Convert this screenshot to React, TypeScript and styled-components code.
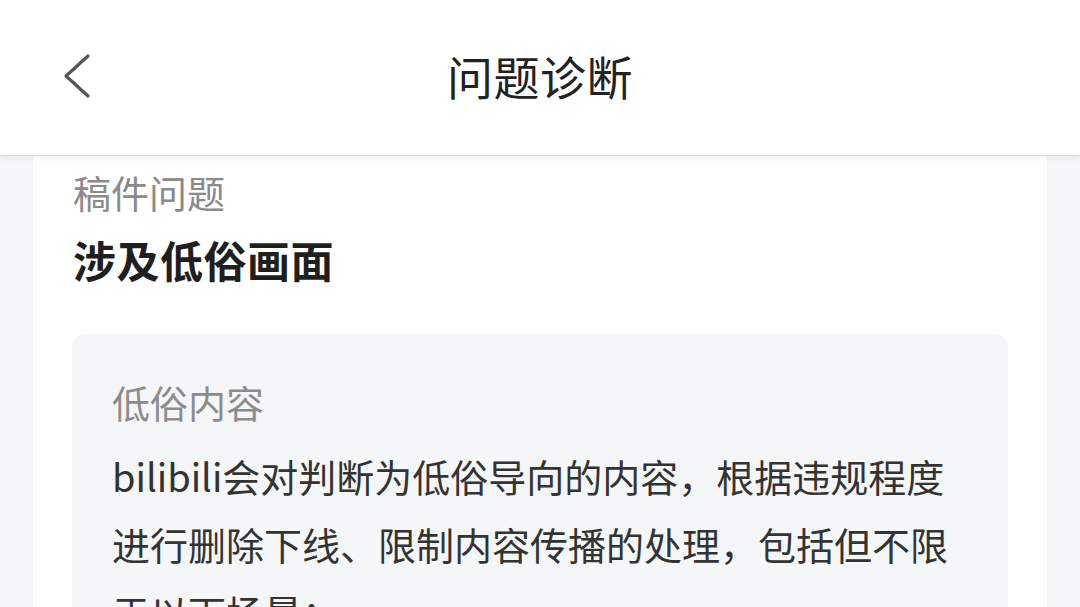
import React from "react";
import styled, { createGlobalStyle } from "styled-components";

const Global = createGlobalStyle`
  html, body { margin: 0; padding: 0; }
  body {
    background: #f4f5f7;
    font-family: "Noto Sans CJK SC", "Noto Sans", sans-serif;
    width: 1080px;
    height: 607px;
    overflow: hidden;
  }
`;

const Page = styled.div`
  width: 1080px;
  height: 607px;
  display: flex;
  flex-direction: column;
  overflow: hidden;
  background: #f4f5f7;
`;

const Header = styled.header`
  position: relative;
  z-index: 1;
  flex: 0 0 auto;
  height: 155px;
  background: #ffffff;
  border-bottom: 1px solid #dcdcdc;
  box-shadow: 0 2px 6px rgba(0, 0, 0, 0.06);
  display: grid;
  grid-template-columns: 120px 1fr 120px;
  align-items: center;
`;

const BackButton = styled.button`
  border: 0;
  background: transparent;
  padding: 0 0 0 63px;
  height: 60px;
  display: flex;
  align-items: center;
  cursor: pointer;
  margin-top: -3px;
`;

const Title = styled.h1`
  margin: 0;
  text-align: center;
  font-size: 46px;
  font-weight: 400;
  color: #222222;
  line-height: 60px;
  margin-top: -5px;
  letter-spacing: 0.5px;
`;

const Main = styled.main`
  flex: 1 1 auto;
  padding: 0 33px;
  display: flex;
`;

const Card = styled.section`
  flex: 1;
  background: #ffffff;
  padding: 10px 39px 0 40px;
  display: flex;
  flex-direction: column;
`;

const Label = styled.div`
  font-size: 38px;
  line-height: 52px;
  color: #8a8a8a;
`;

const Heading = styled.h2`
  margin: 13px 0 0;
  font-size: 43px;
  line-height: 56px;
  font-weight: 700;
  color: #1f1f1f;
  letter-spacing: 0.5px;
`;

const InfoBox = styled.div`
  margin-top: 47px;
  margin-left: -1px;
  background: #f5f6f8;
  border-radius: 14px;
  padding: 42px 40px 0 40px;
  flex: 1;
`;

const BoxLabel = styled.div`
  font-size: 38px;
  line-height: 52px;
  color: #8c8c8c;
`;

const BodyText = styled.p`
  margin: 14px 0 0;
  font-size: 38px;
  line-height: 68px;
  color: #333333;
  white-space: nowrap;
`;

export default function App() {
  return (
    <>
      <Global />
      <Page>
        <Header>
          <BackButton aria-label="返回">
            <svg width="30" height="46" viewBox="0 0 30 46" fill="none">
              <polyline
                points="25,3 3,23 25,43"
                stroke="#555555"
                strokeWidth="3.2"
                strokeLinecap="round"
                strokeLinejoin="round"
              />
            </svg>
          </BackButton>
          <Title>问题诊断</Title>
          <div />
        </Header>
        <Main>
          <Card>
            <Label>稿件问题</Label>
            <Heading>涉及低俗画面</Heading>
            <InfoBox>
              <BoxLabel>低俗内容</BoxLabel>
              <BodyText>
                bilibili会对判断为低俗导向的内容，根据违规程度
                <br />
                进行删除下线、限制内容传播的处理，包括但不限
                <br />
                于以下场景：
              </BodyText>
            </InfoBox>
          </Card>
        </Main>
      </Page>
    </>
  );
}
